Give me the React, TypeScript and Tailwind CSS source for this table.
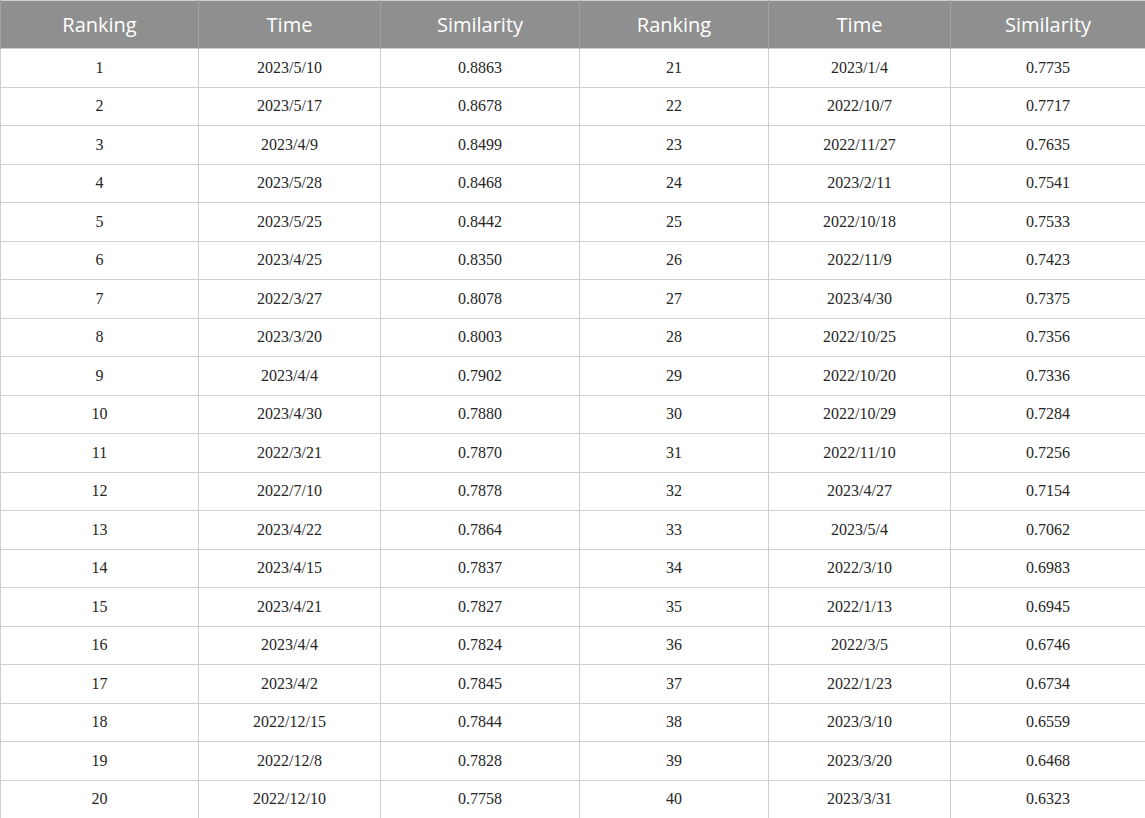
const rows: [string, string, string][] = [
    ["1", "2023/5/10", "0.8863"],
    ["2", "2023/5/17", "0.8678"],
    ["3", "2023/4/9", "0.8499"],
    ["4", "2023/5/28", "0.8468"],
    ["5", "2023/5/25", "0.8442"],
    ["6", "2023/4/25", "0.8350"],
    ["7", "2022/3/27", "0.8078"],
    ["8", "2023/3/20", "0.8003"],
    ["9", "2023/4/4", "0.7902"],
    ["10", "2023/4/30", "0.7880"],
    ["11", "2022/3/21", "0.7870"],
    ["12", "2022/7/10", "0.7878"],
    ["13", "2023/4/22", "0.7864"],
    ["14", "2023/4/15", "0.7837"],
    ["15", "2023/4/21", "0.7827"],
    ["16", "2023/4/4", "0.7824"],
    ["17", "2023/4/2", "0.7845"],
    ["18", "2022/12/15", "0.7844"],
    ["19", "2022/12/8", "0.7828"],
    ["20", "2022/12/10", "0.7758"],
    ["21", "2023/1/4", "0.7735"],
    ["22", "2022/10/7", "0.7717"],
    ["23", "2022/11/27", "0.7635"],
    ["24", "2023/2/11", "0.7541"],
    ["25", "2022/10/18", "0.7533"],
    ["26", "2022/11/9", "0.7423"],
    ["27", "2023/4/30", "0.7375"],
    ["28", "2022/10/25", "0.7356"],
    ["29", "2022/10/20", "0.7336"],
    ["30", "2022/10/29", "0.7284"],
    ["31", "2022/11/10", "0.7256"],
    ["32", "2023/4/27", "0.7154"],
    ["33", "2023/5/4", "0.7062"],
    ["34", "2022/3/10", "0.6983"],
    ["35", "2022/1/13", "0.6945"],
    ["36", "2022/3/5", "0.6746"],
    ["37", "2022/1/23", "0.6734"],
    ["38", "2023/3/10", "0.6559"],
    ["39", "2023/3/20", "0.6468"],
    ["40", "2023/3/31", "0.6323"],
];

const headers = ["Ranking", "Time", "Similarity", "Ranking", "Time", "Similarity"];
const widths = ["w-[198px]", "w-[182px]", "w-[199px]", "w-[189px]", "w-[182px]", "w-[195px]"];

export default function App() {
    const left = rows.slice(0, 20);
    const right = rows.slice(20);

    return (
        <div className="w-[1145px] h-[818px] bg-white overflow-hidden">
            <table className="w-[1145px] table-fixed border-collapse border border-[#cfcfcf]">
                <colgroup>
                    {widths.map((w, i) => (
                        <col key={i} className={w} />
                    ))}
                </colgroup>
                <thead>
                    <tr className="h-[48px] bg-[#8f8f8f]">
                        {headers.map((h, i) => (
                            <th
                                key={i}
                                className="border-x border-[#a3a3a3] text-center align-middle font-normal text-[20px] text-white font-['Open_Sans',sans-serif]"
                            >
                                {h}
                            </th>
                        ))}
                    </tr>
                </thead>
                <tbody>
                    {left.map((r, i) => {
                        const cells = [...r, ...right[i]];
                        return (
                            <tr key={i} className="h-[38.5px]">
                                {cells.map((c, j) => (
                                    <td
                                        key={j}
                                        className="border border-[#cfcfcf] text-center align-middle text-[16px] text-[#262626] font-['Liberation_Serif',serif]"
                                    >
                                        {c}
                                    </td>
                                ))}
                            </tr>
                        );
                    })}
                </tbody>
            </table>
        </div>
    );
}
